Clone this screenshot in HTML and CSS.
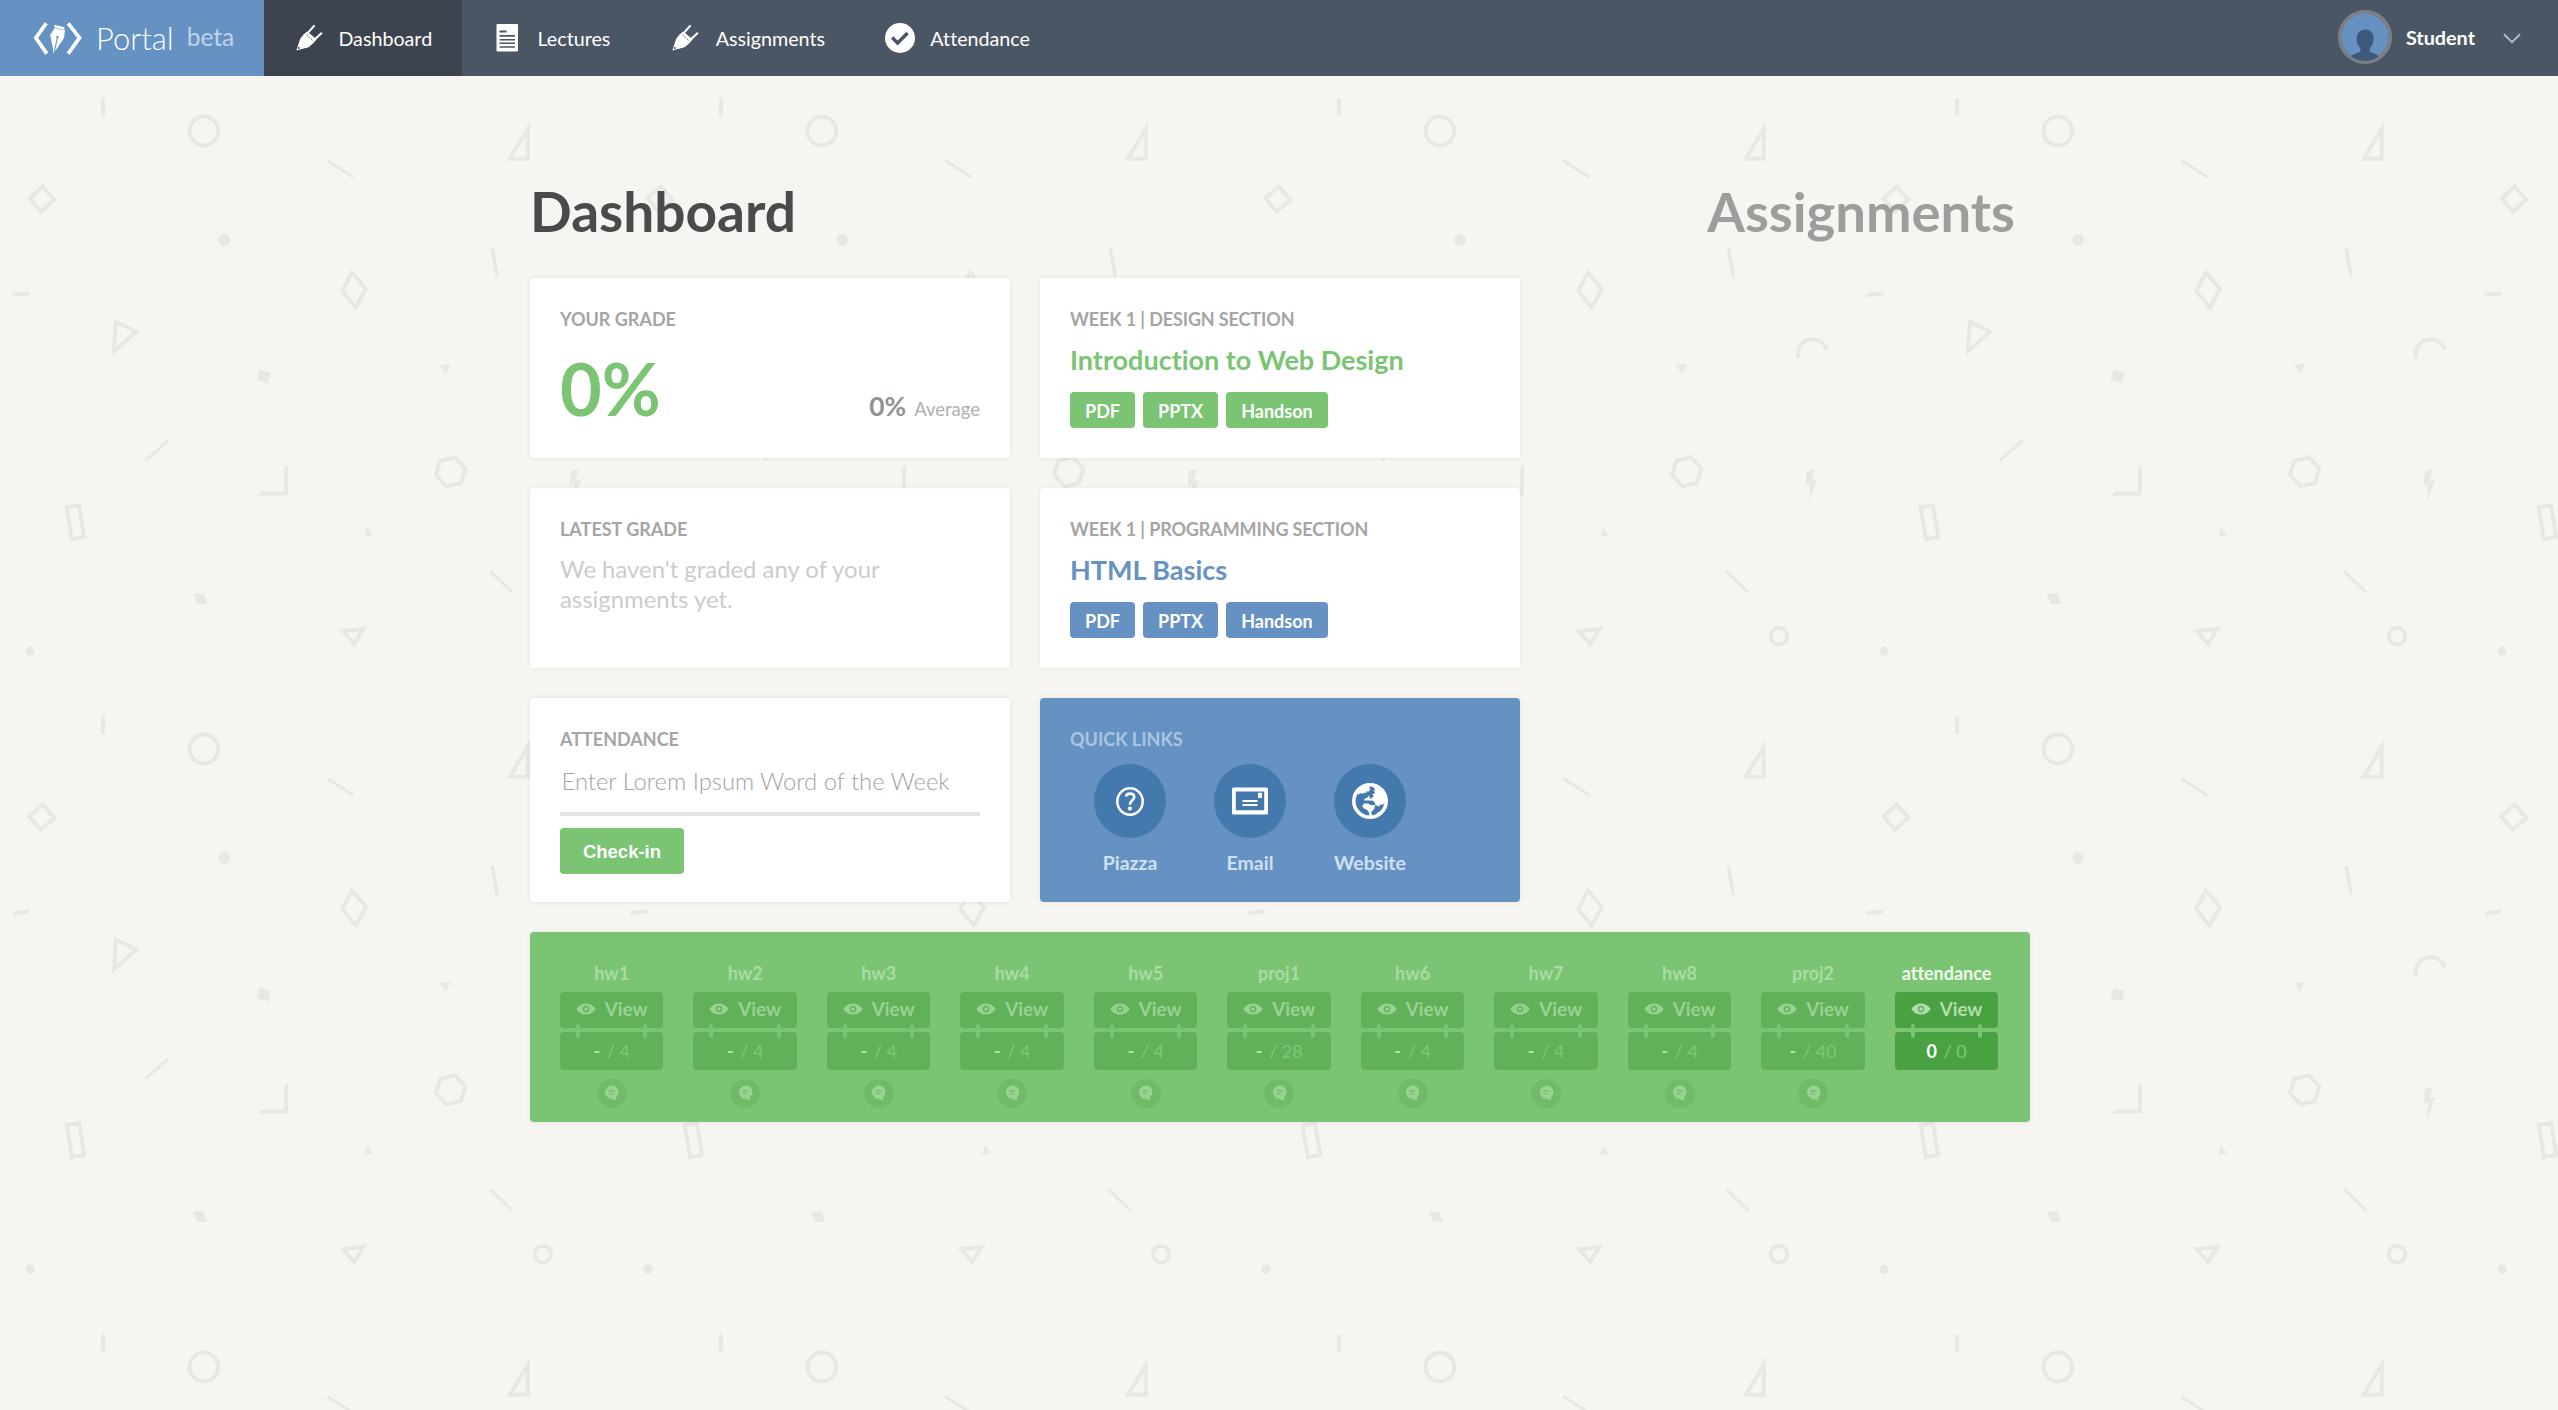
FILE: index.html
```html
<!DOCTYPE html>
<html lang="en">
<head>
<meta charset="utf-8">
<title>Portal</title>
<link rel="stylesheet" href="styles.css">
</head>
<body>
<svg class="defs" width="0" height="0" aria-hidden="true">
  <symbol id="i-pen" viewBox="0 0 30 30">
    <path d="M2.3 27.6 6.3 15.4 9.8 11.2 13.2 8.4 22.6 16.3 19.8 19.8 14.6 24.2Z" fill="currentColor"/>
    <path d="M13.2 10.6 20 3M20.4 16.8 27.4 10.2" stroke="currentColor" stroke-width="2" stroke-linecap="round" fill="none"/>
    <path d="M12.6 11.6 19.6 18.4" stroke="#3d4450" stroke-width=".7" stroke-dasharray="2 .8"/>
    <circle cx="4.8" cy="25" r=".9" fill="#3d4450"/>
  </symbol>
  <symbol id="i-doc" viewBox="0 0 30 30">
    <path fill="currentColor" fill-rule="evenodd" d="M5.500 1H25a1 1 0 0 1 1 1v25.500a1 1 0 0 1-1 1H5.500a1 1 0 0 1-1-1V2a1 1 0 0 1 1-1ZM7.500 7.500v2h7v-2ZM7.500 12v1.800h15.500V12ZM7.500 16v1.600h15.500V16ZM7.500 19.500v1.500h15.500v-1.500ZM7.500 23.200v1.500h15.500v-1.500Z"/>
  </symbol>
  <symbol id="i-check" viewBox="0 0 30 30">
    <circle cx="15" cy="15" r="15" fill="currentColor"/>
    <path d="M7.200 14.500 12.600 20 22.600 10" fill="none" stroke="#4b5665" stroke-width="3.400"/>
  </symbol>
  <symbol id="i-eye" viewBox="0 0 20 12">
    <path fill="currentColor" d="M.3 6C3 2.200 6.200.4 10 .4S17 2.200 19.700 6C17 9.800 13.800 11.600 10 11.600S3 9.800.3 6Z"/>
    <circle class="pupil" cx="10" cy="6" r="2.600" stroke-width="1.500" fill="none"/>
  </symbol>
  <symbol id="i-chat" viewBox="0 0 16 16">
    <path fill="currentColor" d="M8 0a7.200 7.200 0 0 1 4.800 12.700L13 16 8.500 14.400A7.200 7.200 0 1 1 8 0Z"/>
    <path class="chat-lines" d="M4.800 5.800h6.600M4.800 8.800h4.600" stroke-width="1.300"/>
  </symbol>
</svg>

<svg class="backdrop" width="100%" height="100%" aria-hidden="true">
  <pattern id="shapes" patternUnits="userSpaceOnUse" x="0" y="80" width="618" height="618" viewBox="0 80 618 618">
    <g fill="none" stroke="#e8e7e4" stroke-width="4" stroke-miterlimit="10">
      <path d="M103 98.600v17"/>
      <circle cx="203.900" cy="131" r="14.400"/>
      <path d="M327.200 160.500 353.600 177.300" stroke-width="3"/>
      <path d="M509.800 158.700H527.700V129Z"/>
      <path d="M42.800 186.600 54.400 199.800 40.600 211.700 29.500 198.300Z"/>
      <path d="M12.700 295.300 29.300 293.300"/>
      <path d="M115.800 321.500 136 331.800 114 351.500Z"/>
      <path d="M351.900 272.500 366 289 355.700 307.500 342.300 291.200Z"/>
      <path d="M492.200 248 497.300 277" stroke-width="3.400"/>
      <path d="M146 460.200 168.700 440.400" stroke-width="3"/>
      <path d="M440.400 460.700 455 457.400 465.500 468.700 460.800 483.100 446.600 486.400 435.800 474.800Z"/>
      <path d="M66.600 507 79.100 505.400 84.100 537 72 539.200Z"/>
      <path d="M490.200 571.300 512.500 592.700" stroke-width="3"/>
      <path d="M562.300 358.300A14.900 14.900 0 0 1 590.700 349.300"/>
      <path d="M343 631.200 363.500 629 354.200 644Z"/>
      <circle cx="543" cy="636.300" r="8.300"/>
    </g>
    <g fill="#e8e7e4">
      <circle cx="224.100" cy="240" r="6"/>
      <circle cx="30" cy="651.300" r="4.700"/>
      <path d="M259.300 369.700 270.800 373 268 383.500 256.600 380.200Z"/>
      <path d="M439.800 365.500 450.600 363.800 446.200 373.900Z"/>
      <path d="M288 464.800V495.500H257.600L262 491.300H284V467.700Z"/>
      <path d="M366.800 527.500 373.200 535 364.400 537.200Z"/>
      <path d="M570.700 471 578.700 469 575.700 480.700 581 479.700 573.300 502 574 483.500 569.700 486Z"/>
      <path d="M193 593.600H203.500L207.200 604.100H197.100Z"/>
    </g>
  </pattern>
  <rect width="100%" height="100%" fill="url(#shapes)"/>
</svg>

<header class="nav">
  <a class="brand">
    <svg class="brand-mark" viewBox="34 20 48 35" width="48" height="35">
      <path d="M46.200 22.400 35.800 36.900 46.800 52.600M68.200 22.400 79.500 36.900 68.200 52.600" fill="none" stroke="#fff" stroke-width="3.700"/>
      <path fill="#fff" d="M54.300 23.800 64.600 26.200 63.900 28.200 65 29 64 37 53.600 52.600 52.600 46 50.200 34 53.600 28.800 54.600 26Z"/>
      <path d="M54.300 51.500 57.200 37" stroke="#6592c2" stroke-width="1.100"/>
      <circle cx="57.400" cy="36" r="1.200" fill="#6592c2"/>
      <path d="M54.300 26.900 63.800 29" stroke="#6592c2" stroke-width=".6"/>
    </svg>
    <span class="brand-name">Portal</span><span class="brand-tag">beta</span>
  </a>
  <nav class="links">
    <a class="link active"><svg><use href="#i-pen"/></svg>Dashboard</a>
    <a class="link"><svg><use href="#i-doc"/></svg>Lectures</a>
    <a class="link"><svg><use href="#i-pen"/></svg>Assignments</a>
    <a class="link"><svg><use href="#i-check"/></svg>Attendance</a>
  </nav>
  <div class="user">
    <svg class="avatar" viewBox="0 0 54 54">
      <circle cx="27" cy="27" r="25" fill="#6592c2" stroke="#7b8088" stroke-width="4"/>
      <path fill="#3d5a7b" d="M27.300 19.500c5 0 8.400 3.800 8.400 9 0 4.300-1.600 8-4 9.800v3.200c2.500 1.400 6.500 2.200 9.200 4.700A23 23 0 0 1 13.100 46.200c2.700-2.500 6.800-3.300 9.300-4.700v-3.200c-2.300-1.900-3.800-5.500-3.800-9.800 0-5.200 3.600-9 8.700-9Z"/>
    </svg>
    <span class="user-name">Student</span>
    <svg class="chevron" viewBox="0 0 18 11"><path d="M1 1.200 9 9.200 17 1.200" fill="none" stroke="#b4b9c0" stroke-width="2"/></svg>
  </div>
</header>

<main class="page">
  <div class="headings">
    <h1>Dashboard</h1>
    <h1 class="muted">Assignments</h1>
  </div>

  <div class="cards">
    <section class="card">
      <h2 class="label">YOUR GRADE</h2>
      <div class="grade">
        <strong class="grade-value">0%</strong>
        <span class="average"><b>0%</b>Average</span>
      </div>
    </section>
    <section class="card lecture green">
      <h2 class="label">WEEK 1 | DESIGN SECTION</h2>
      <h3 class="title">Introduction to Web Design</h3>
      <div class="chips"><a>PDF</a><a>PPTX</a><a>Handson</a></div>
    </section>
    <section class="card">
      <h2 class="label">LATEST GRADE</h2>
      <p class="empty">We haven't graded any of your assignments yet.</p>
    </section>
    <section class="card lecture blue">
      <h2 class="label">WEEK 1 | PROGRAMMING SECTION</h2>
      <h3 class="title">HTML Basics</h3>
      <div class="chips"><a>PDF</a><a>PPTX</a><a>Handson</a></div>
    </section>
    <section class="card">
      <h2 class="label">ATTENDANCE</h2>
      <input class="word" type="text" placeholder="Enter Lorem Ipsum Word of the Week">
      <button class="checkin">Check-in</button>
    </section>
    <section class="card quick">
      <h2 class="label">QUICK LINKS</h2>
      <div class="quick-links">
        <a class="quick-link"><span class="disc">
          <svg width="28" height="29" viewBox="0 0 28 29"><ellipse cx="14" cy="14.500" rx="12.700" ry="13.200" fill="none" stroke="#fff" stroke-width="2.500"/><path d="M10.200 9.600C10.200 7.400 12 6.600 14 6.600c2.400 0 4.200 1.200 4.200 3.500 0 3.600-4.300 3.400-4.300 7.600" fill="none" stroke="#fff" stroke-width="2.600"/><circle cx="13.900" cy="21.600" r="2.100" fill="#fff"/></svg>
        </span>Piazza</a>
        <a class="quick-link"><span class="disc">
          <svg width="36" height="28" viewBox="0 0 36 28"><path fill="#fff" fill-rule="evenodd" d="M1.500.5h33A1.500 1.500 0 0 1 36 2v24a1.500 1.500 0 0 1-1.500 1.500h-33A1.500 1.500 0 0 1 0 26V2A1.500 1.500 0 0 1 1.500.5ZM3.800 4.600v18.600h28.400V4.600Z"/><path fill="#fff" d="M26 5.800h4v5.200h-4ZM10.500 13h15v2h-15ZM10.500 17h15v2h-15Z"/></svg>
        </span>Email</a>
        <a class="quick-link"><span class="disc">
          <svg width="36" height="36" viewBox="0 0 36 36"><circle cx="18" cy="18" r="16.200" fill="none" stroke="#fff" stroke-width="3.600"/><path fill="#fff" d="M4.500 8.500 9 4l5-2 4 1.500-.8 1.800 1.300 1-1.800 2.200h-2.500l.3 1.800-2-.8-1.300 1.300-3-.6-2 1.600ZM20 2.500 29 5l4.500 8 .5 5-3 3.600-2.800.2-1.500 1.800-3.400-1.500-.8-3.200-2.200-1.400-2 .3 1.600-3.400 2.200-.8-1.800-1.800 2.800-2-1.600-1.800 1.600-1.500ZM12.200 16l3.200-1.600 1.600-2 1 2.600 2.600 2.400h-8.400ZM12 20.400h4.400l1.200 1.400 5.600.4-.8 3.600-3.200 3.200.8 2.600-.6 3h-2.200l-.2-5.400-2.400-2.800-2.400-.6-2-2.200ZM24.500 32l.6-2.200 3.200-1.600Z"/></svg>
        </span>Website</a>
      </div>
    </section>
  </div>

  <section class="grades">
    <div class="item"><span class="name">hw1</span><a class="view"><svg><use href="#i-eye"/></svg>View</a><div class="score"><b>-</b> / 4</div><span class="note"><svg><use href="#i-chat"/></svg></span></div>
    <div class="item"><span class="name">hw2</span><a class="view"><svg><use href="#i-eye"/></svg>View</a><div class="score"><b>-</b> / 4</div><span class="note"><svg><use href="#i-chat"/></svg></span></div>
    <div class="item"><span class="name">hw3</span><a class="view"><svg><use href="#i-eye"/></svg>View</a><div class="score"><b>-</b> / 4</div><span class="note"><svg><use href="#i-chat"/></svg></span></div>
    <div class="item"><span class="name">hw4</span><a class="view"><svg><use href="#i-eye"/></svg>View</a><div class="score"><b>-</b> / 4</div><span class="note"><svg><use href="#i-chat"/></svg></span></div>
    <div class="item"><span class="name">hw5</span><a class="view"><svg><use href="#i-eye"/></svg>View</a><div class="score"><b>-</b> / 4</div><span class="note"><svg><use href="#i-chat"/></svg></span></div>
    <div class="item"><span class="name">proj1</span><a class="view"><svg><use href="#i-eye"/></svg>View</a><div class="score"><b>-</b> / 28</div><span class="note"><svg><use href="#i-chat"/></svg></span></div>
    <div class="item"><span class="name">hw6</span><a class="view"><svg><use href="#i-eye"/></svg>View</a><div class="score"><b>-</b> / 4</div><span class="note"><svg><use href="#i-chat"/></svg></span></div>
    <div class="item"><span class="name">hw7</span><a class="view"><svg><use href="#i-eye"/></svg>View</a><div class="score"><b>-</b> / 4</div><span class="note"><svg><use href="#i-chat"/></svg></span></div>
    <div class="item"><span class="name">hw8</span><a class="view"><svg><use href="#i-eye"/></svg>View</a><div class="score"><b>-</b> / 4</div><span class="note"><svg><use href="#i-chat"/></svg></span></div>
    <div class="item"><span class="name">proj2</span><a class="view"><svg><use href="#i-eye"/></svg>View</a><div class="score"><b>-</b> / 40</div><span class="note"><svg><use href="#i-chat"/></svg></span></div>
    <div class="item open"><span class="name">attendance</span><a class="view"><svg><use href="#i-eye"/></svg>View</a><div class="score"><b>0</b> / 0</div></div>
  </section>
</main>
</body>
</html>
```
FILE: styles.css
```css
* { box-sizing: border-box; }

body {
  margin: 0;
  min-height: 1410px;
  position: relative;
  background: #f6f5f1;
  font-family: Lato, "Liberation Sans", sans-serif;
  font-variant-ligatures: none;
  color: #4a4a4a;
}

h1, h2, h3, p { margin: 0; }

.defs { position: absolute; }
.backdrop { position: absolute; inset: 0; z-index: -1; }

/* Top bar */
.nav { display: flex; height: 76px; background: #4b5665; color: #fff; }
.brand {
  display: flex; align-items: center;
  width: 264px; padding-left: 34px;
  background: #6592c2; line-height: 76px;
}
.brand-mark { margin-right: 14px; }
.brand-name { font-size: 31px; font-weight: 300; }
.brand-tag { margin: 0 0 3px 13px; font-size: 24.5px; color: #bfd2e9; }
.links { display: flex; }
.link {
  display: flex; align-items: center; gap: 15.3px;
  height: 76px; padding: 1px 30px 0; font-size: 19.7px; line-height: 75px;
}
.link svg { width: 30px; height: 30px; margin-bottom: 2px; }
.link.active { gap: 14.4px; background: #3d4450; }
.user { display: flex; align-items: center; margin-left: auto; padding-right: 37px; }
.avatar { width: 54px; height: 54px; margin: 0 14px 2px 0; }
.user-name { margin: 0 28px 3px 0; font-size: 19.8px; font-weight: 700; }
.chevron { width: 18px; height: 11px; }

/* Page */
.page { width: 1500px; margin-left: 530px; padding-top: 103px; }
.headings {
  display: flex; justify-content: space-between;
  height: 65px; margin-bottom: 34px; padding-right: 15px;
}
h1 { font-size: 55px; line-height: 65px; font-weight: 700; }
.muted { font-size: 54.400px; color: #9d9d9c; }

.cards {
  display: grid; grid-template-columns: 480px 480px;
  grid-template-rows: 180px 180px 204px; gap: 30px;
}
.card {
  padding: 30px; border-radius: 4px; background: #fff;
  box-shadow: 0 0 4px rgba(120, 90, 70, .1);
}
.label { font-size: 18px; line-height: 22px; font-weight: 700; color: #a5a5a5; }
.lecture .label { letter-spacing: -.12px; }
.grade { display: flex; align-items: baseline; justify-content: space-between; margin-top: 22px; }
.grade-value { font-size: 72px; line-height: 72px; color: #7ac473; }
.average { font-size: 18.5px; color: #b0b0b0; }
.average b { margin-right: 8px; font-size: 26.400px; color: #929292; }

.title { margin-top: 13px; font-size: 27px; line-height: 34px; font-weight: 700; }
.green .title { color: #7ac473; }
.blue .title { color: #6592c2; }
.chips { display: flex; gap: 8px; margin-top: 15px; }
.chips a {
  padding: 2px 15px 0; border-radius: 4px;
  font-size: 18px; line-height: 34px; font-weight: 700; color: #fff;
}
.green .chips a { background: #7ac473; }
.blue .chips a { background: #6592c2; }

.empty { margin-top: 14px; font-size: 23.900px; line-height: 30px; color: #ccc; }

.word {
  display: block; width: 100%; height: 66px; padding: 0 1px 0 1.5px;
  border: 0; border-bottom: 4px solid #e4e4e4; background: none;
  font: 300 23.800px Lato, sans-serif;
}
.word::placeholder { color: #a3a3a3; }
.checkin {
  display: block; width: 124px; height: 46px; margin-top: 12px; padding: 2px 0 0;
  border: 0; border-radius: 4px; background: #7ac473;
  font: 700 18.5px "Liberation Sans", sans-serif; color: #fff;
}

.quick { background: #6592c2; }
.quick .label { color: #a9c5e1; }
.quick-links { display: flex; margin-top: 14px; }
.quick-link {
  display: flex; flex-direction: column; align-items: center; gap: 13px;
  width: 120px; font-size: 19.5px; line-height: 24px; font-weight: 700; color: #cde0f3;
}
.disc {
  display: flex; align-items: center; justify-content: center;
  width: 72px; height: 74px; border-radius: 50%; background: #4479ad;
}

/* Grade strip */
.grades {
  display: grid; grid-template-columns: repeat(11, 103.400px); column-gap: 30.100px;
  height: 190px; margin-top: 30px; padding: 30px;
  border-radius: 4px; background: #7ac473;
  box-shadow: 0 0 4px rgba(120, 90, 70, .1);
}
.item {
  display: flex; flex-direction: column; align-items: stretch;
  font-size: 18.800px; color: #99d394;
}
.name {
  margin-bottom: 8px; font-size: 18px; line-height: 22px; font-weight: 700;
  text-align: center; color: #a9dca4;
}
.view {
  display: flex; align-items: center; justify-content: center; gap: 9px;
  height: 36px; padding-bottom: 3px; border-radius: 4px; background: #61b15a; font-weight: 700;
}
.view svg { width: 20px; height: 12px; margin-top: 1px; }
.pupil { stroke: #61b15a; }
.score {
  position: relative; height: 38px; margin-top: 4px;
  border-radius: 4px; background: #61b15a;
  font-size: 18px; line-height: 38px; text-align: center; color: #7fc879;
}
.score b { margin-right: 2px; color: #b2e1ad; }
.score::before, .score::after {
  content: ""; position: absolute; top: -8px;
  width: 4px; height: 14px; border-radius: 2px; background: #7ac473;
}
.score::before { left: 16px; }
.score::after { right: 16px; }
.note {
  display: flex; align-items: center; justify-content: center; align-self: center;
  width: 30px; height: 29px; margin-top: 8.5px; border-radius: 50%; background: #6fbb68;
}
.note svg { width: 15px; height: 16px; margin-bottom: 1px; }
.chat-lines { stroke: #6fbb68; }
.open { color: #b0dfab; }
.open .name { color: #f0fbee; }
.open .view, .open .score { background: #4aa141; }
.open .pupil { stroke: #4aa141; }
.open .score b { color: #fff; }
```
